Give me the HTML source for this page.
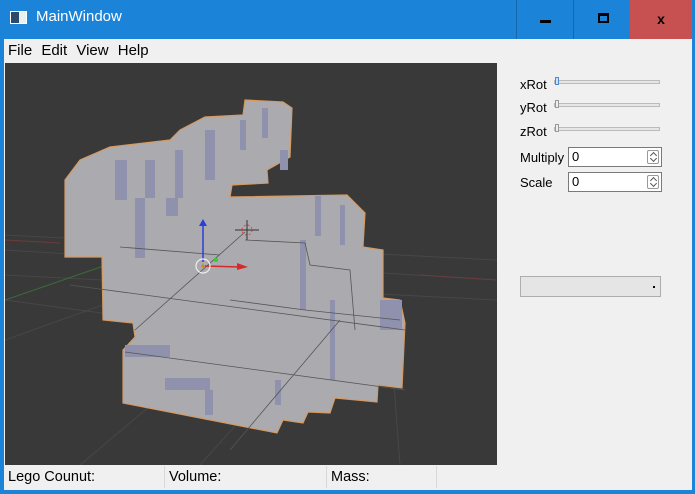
<!DOCTYPE html>
<html><head><style>
*{margin:0;padding:0;box-sizing:border-box}
body{width:695px;height:494px;overflow:hidden;background:#1b84d8;font-family:"Liberation Sans",sans-serif;font-size:13px;color:#000;position:relative}
.abs{position:absolute}
#client{left:4px;top:39px;width:688px;height:451px;background:#f0f0f0}
.title{left:36px;top:8px;color:#fff;font-size:15px}
.btn{top:0;height:39px;border-left:1px solid #1668ad}
.lab{font-size:13px}
.slider{height:4px;border:1px solid #bbb;background:#e6e6e6}
.spin{background:#fff;border:1px solid #7a7a7a;height:20px;padding-left:3px;font-size:13px;line-height:18px}
.arr{position:absolute;right:2px;top:2px;width:12px;height:14px;border:1px solid #999;border-radius:2px}
.arr:before{content:"";position:absolute;left:3px;top:2px;width:4px;height:4px;border-left:1px solid #555;border-top:1px solid #555;transform:rotate(45deg)}
.arr:after{content:"";position:absolute;left:3px;top:5px;width:4px;height:4px;border-right:1px solid #555;border-bottom:1px solid #555;transform:rotate(45deg)}
.sb{top:466px;height:22px;border-right:1px solid #d8d8d8;padding-left:4px;line-height:22px;font-size:14.5px}
</style></head><body>
<div class="abs" style="left:10px;top:11px;width:17px;height:13px;background:#e8f0f0;border:1px solid #fff"><div style="width:8px;height:11px;background:#2c4a6a"></div></div>
<div class="abs title">MainWindow</div>
<div class="abs btn" style="left:516px;width:58px"><div class="abs" style="left:23px;top:20px;width:11px;height:3px;background:#000"></div></div>
<div class="abs btn" style="left:573px;width:58px"><div class="abs" style="left:24px;top:13px;width:11px;height:10px;border:2px solid #000;border-top-width:3px"></div></div>
<div class="abs" style="left:630px;top:0;width:62px;height:39px;background:#c75050;color:#000;font-weight:bold;font-size:14px;text-align:center;line-height:38px">x</div>
<div class="abs" id="client"></div>
<div class="abs" style="left:8px;top:42px;font-size:15px;word-spacing:5px">File Edit View Help</div>
<div class="abs" style="left:5px;top:63px;width:492px;height:402px;background:#393939;overflow:hidden">
<svg width="492" height="402" viewBox="5 63 492 402">
<g stroke="#474747" stroke-width="1" fill="none">
<path d="M5 235 L497 260 M5 250 L497 280 M5 275 L497 300 M5 300 L300 340 M80 465 L240 330 M200 465 L330 320 M400 465 L390 330 M5 340 L200 270"/>
</g>
<path d="M5 300 L150 250" stroke="#3d6a3d" stroke-width="1"/>
<path d="M5 240 L60 243 M420 275 L497 280" stroke="#6a3d3d" stroke-width="1"/>
<polygon fill="#ababaf" stroke="#d49a64" stroke-width="1.2" points="65,180 80,160 110,147 170,140 180,130 205,117 243,115 245,100 283,102 292,108 290,157 267,170 268,183 232,185 230,197 347,195 365,213 363,247 383,250 383,298 400,300 405,323 402,388 378,385 377,402 335,398 330,413 308,412 303,423 283,420 277,433 123,403 123,350 135,337 133,323 103,320 102,257 65,257"/>
<g fill="#8f91ad">
<rect x="115" y="160" width="12" height="40"/><rect x="145" y="160" width="10" height="38"/><rect x="175" y="150" width="8" height="48"/>
<rect x="135" y="198" width="10" height="60"/><rect x="166" y="198" width="12" height="18"/><rect x="205" y="130" width="10" height="50"/>
<rect x="240" y="120" width="6" height="30"/><rect x="262" y="108" width="6" height="30"/><rect x="280" y="150" width="8" height="20"/>
<rect x="315" y="196" width="6" height="40"/><rect x="340" y="205" width="5" height="40"/><rect x="300" y="240" width="6" height="70"/>
<rect x="330" y="300" width="5" height="80"/><rect x="380" y="300" width="22" height="30"/><rect x="125" y="345" width="45" height="12"/>
<rect x="165" y="378" width="45" height="12"/><rect x="205" y="390" width="8" height="25"/><rect x="275" y="380" width="6" height="25"/>
</g>
<path d="M120 247 L220 255 M245 240 L305 243 L310 265 L350 270 L355 330 M230 300 L305 310 L400 320 M70 285 L405 330 M125 352 L405 390 M135 330 L245 232 M230 450 L340 320" stroke="#555" stroke-width="0.8" fill="none"/>
<path d="M203 262 L203 222" stroke="#2a3fd6" stroke-width="1.5"/><path d="M199 226 L203 219 L207 226Z" fill="#2a3fd6"/>
<path d="M205 266 L240 267" stroke="#d62a2a" stroke-width="1.5"/><path d="M237 263 L248 267 L237 270Z" fill="#d62a2a"/>
<circle cx="216" cy="260" r="2" fill="#3c3"/>
<circle cx="203" cy="266" r="7" stroke="#eee" fill="none" stroke-width="1.2"/><circle cx="203" cy="266" r="1.5" fill="#c80"/>
<circle cx="247" cy="230" r="5" stroke="#d44" fill="none" stroke-dasharray="2 2"/><path d="M235 230 L259 230 M247 220 L247 240" stroke="#333"/>
</svg></div>
<div class="abs lab" style="left:520px;top:77px">xRot</div>
<div class="abs slider" style="left:554px;top:80px;width:106px"></div>
<div class="abs" style="left:555px;top:77px;width:4px;height:8px;border:1px solid #4a8bd0;background:#cfe3f7"></div>
<div class="abs lab" style="left:520px;top:100px">yRot</div>
<div class="abs slider" style="left:554px;top:103px;width:106px"></div>
<div class="abs" style="left:555px;top:100px;width:4px;height:8px;border:1px solid #999;background:#eee"></div>
<div class="abs lab" style="left:520px;top:124px">zRot</div>
<div class="abs slider" style="left:554px;top:127px;width:106px"></div>
<div class="abs" style="left:555px;top:124px;width:4px;height:8px;border:1px solid #999;background:#eee"></div>
<div class="abs lab" style="left:520px;top:150px">Multiply</div>
<div class="abs spin" style="left:568px;top:147px;width:94px">0<div class="arr"></div></div>
<div class="abs lab" style="left:520px;top:175px">Scale</div>
<div class="abs spin" style="left:568px;top:172px;width:94px">0<div class="arr"></div></div>
<div class="abs" style="left:520px;top:276px;width:141px;height:21px;background:#e5e5e5;border:1px solid #adadad"><div class="abs" style="right:5px;top:9px;width:2px;height:2px;background:#000"></div></div>
<div class="abs sb" style="left:4px;width:161px">Lego Counut:</div>
<div class="abs sb" style="left:165px;width:162px">Volume:</div>
<div class="abs sb" style="left:327px;width:110px">Mass:</div>
</body></html>
